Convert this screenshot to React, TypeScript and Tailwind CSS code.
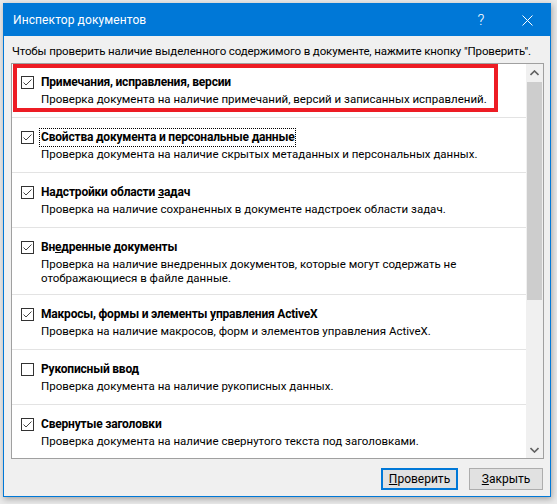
import type { ReactNode } from "react";

type Item = {
  title: ReactNode;
  desc: ReactNode;
  checked: boolean;
  focused?: boolean;
  pb: string;
};

const items: Item[] = [
  {
    title: "Примечания, исправления, версии",
    desc: "Проверка документа на наличие примечаний, версий и записанных исправлений.",
    checked: true,
    pb: "pb-[11px]",
  },
  {
    title: (
      <>
        Свойства <u>д</u>окумента и персональные данные
      </>
    ),
    desc: "Проверка документа на наличие скрытых метаданных и персональных данных.",
    checked: true,
    focused: true,
    pb: "pb-[11px]",
  },
  {
    title: (
      <>
        Надстройки области <u>з</u>адач
      </>
    ),
    desc: "Проверка на наличие сохраненных в документе надстроек области задач.",
    checked: true,
    pb: "pb-[11px]",
  },
  {
    title: (
      <>
        Вн<u>е</u>дренные документы
      </>
    ),
    desc: (
      <>
        Проверка на наличие внедренных документов, которые могут содержать не
        <br />
        отображающиеся в файле данные.
      </>
    ),
    checked: true,
    pb: "pb-[9px]",
  },
  {
    title: (
      <>
        Макросы, формы и элементы <u>у</u>правления ActiveX
      </>
    ),
    desc: "Проверка на наличие макросов, форм и элементов управления ActiveX.",
    checked: true,
    pb: "pb-[11px]",
  },
  {
    title: "Рукописный ввод",
    desc: "Проверка документа на наличие рукописных данных.",
    checked: false,
    pb: "pb-[11px]",
  },
  {
    title: "Свернутые заголовки",
    desc: "Проверка документа на наличие свернутого текста под заголовками.",
    checked: true,
    pb: "pb-[11px]",
  },
];

function CheckBox({ checked }: { checked: boolean }) {
  return (
    <svg width="13" height="13" viewBox="0 0 13 13" className="shrink-0">
      <rect x="0.5" y="0.5" width="12" height="12" fill="#fff" stroke="#333" />
      {checked && (
        <polyline
          points="2.5,6.5 5,9 10.5,3.5"
          fill="none"
          stroke="#444"
          strokeWidth="1"
        />
      )}
    </svg>
  );
}

function Row({ item }: { item: Item }) {
  return (
    <div className={`border-t border-[#e3e3e3] pt-[11px] pl-[9px] ${item.pb}`}>
      <div className="flex items-center gap-[7px] h-[16px]">
        <CheckBox checked={item.checked} />
        <span
          className={`font-bold text-[12px] leading-[15px] tracking-[-0.2px] whitespace-nowrap ${
            item.focused ? "outline-1 outline-dotted outline-black outline-offset-[1px]" : ""
          }`}
        >
          {item.title}
        </span>
      </div>
      <p className="mt-[2px] pl-[20px] text-[11.5px] leading-[14px] whitespace-nowrap">
        {item.desc}
      </p>
    </div>
  );
}

export default function App() {
  return (
    <div className="w-[557px] h-[504px] bg-[#e9e9e9] pt-[3px] pl-[3px] font-['Roboto',sans-serif] text-black">
      <div className="w-[548px] h-[494px] border border-[#0078d7] bg-[#f0f0f0] flex flex-col shadow-[1px_2px_6px_rgba(0,0,0,0.3)]">
        {/* TITLE BAR */}
        <div className="h-[32px] bg-[#0078d7] flex items-center text-white shrink-0">
          <div className="flex-1 pl-[9px] text-[12px] leading-[20px] tracking-[0.1px]">
            Инспектор документов
          </div>
          <div className="w-[46px] h-full flex items-center justify-center text-[15px] font-light">
            ?
          </div>
          <div className="w-[46px] h-full flex items-center justify-center">
            <svg width="11" height="11" viewBox="0 0 11 11">
              <path d="M0.5 0.5 L10.5 10.5 M10.5 0.5 L0.5 10.5" stroke="#fff" strokeWidth="1" />
            </svg>
          </div>
        </div>

        {/* BODY */}
        <div className="flex-1 flex flex-col pt-[7px] pl-[7px] pr-[6px] pb-[6px]">
          <p className="pl-[1px] text-[11.5px] leading-[16px] tracking-[-0.12px] whitespace-nowrap">
            Чтобы проверить наличие выделенного содержимого в документе, нажмите кнопку "Проверить".
          </p>

          {/* LIST */}
          <div className="mt-[4px] w-[533px] h-[396px] border border-[#a0a0a0] flex">
            <div className="flex-1 relative overflow-hidden bg-white">
              <div className="-mt-[2px]">
                {items.map((item, i) => (
                  <Row key={i} item={item} />
                ))}
              </div>
              <div className="absolute left-[1px] top-0 w-[485px] h-[48px] border-4 border-[#ed1c24]" />
            </div>
            <div className="w-[17px] bg-[#f0f0f0] flex flex-col items-center">
              <div className="h-[18px] w-full flex items-center justify-center">
                <svg width="9" height="6" viewBox="0 0 9 6">
                  <path d="M0.5 5 L4.5 1 L8.5 5" fill="none" stroke="#606060" strokeWidth="1.6" />
                </svg>
              </div>
              <div className="w-[15px] h-[218px] bg-[#cdcdcd]" />
              <div className="flex-1" />
              <div className="h-[17px] w-full flex items-center justify-center">
                <svg width="9" height="6" viewBox="0 0 9 6">
                  <path d="M0.5 1 L4.5 5 L8.5 1" fill="none" stroke="#606060" strokeWidth="1.6" />
                </svg>
              </div>
            </div>
          </div>

          {/* BUTTONS */}
          <div className="mt-[9px] flex justify-end gap-[11px] pr-[1px]">
            <button className="w-[77px] h-[22px] border-2 border-[#0078d7] bg-[#e1e1e1] text-[12px] leading-[16px]">
              <u>П</u>роверить
            </button>
            <button className="w-[74px] h-[22px] border border-[#adadad] bg-[#e1e1e1] text-[12px] leading-[16px]">
              <u>З</u>акрыть
            </button>
          </div>
        </div>
      </div>
    </div>
  );
}
